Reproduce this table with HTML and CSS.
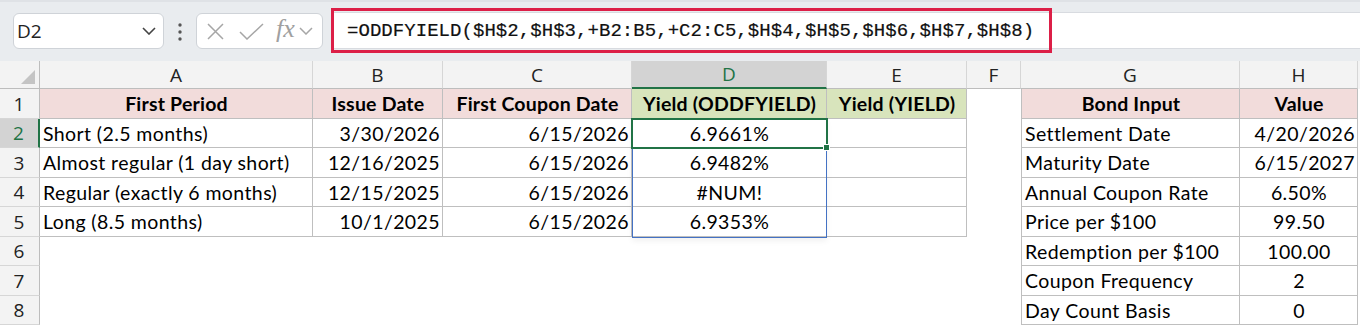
FILE: index.html
```html
<!DOCTYPE html>
<html>
<head>
<meta charset="utf-8">
<link rel="stylesheet" href="styles.css">
</head>
<body>
<div class="topbar">
  <div class="namebox">
    <span class="nb-text">D2</span>
    <svg class="chev" width="14" height="8" viewBox="0 0 14 8"><path d="M1 1 L7 7 L13 1" fill="none" stroke="#444" stroke-width="1.6"/></svg>
  </div>
  <svg class="dots" width="6" height="20" viewBox="0 0 6 20"><circle cx="3" cy="3" r="1.7" fill="#555"/><circle cx="3" cy="10" r="1.7" fill="#555"/><circle cx="3" cy="17" r="1.7" fill="#555"/></svg>
  <div class="fxbox">
    <svg class="ico-x" width="17" height="17" viewBox="0 0 17 17"><path d="M1 1 L16 16 M16 1 L1 16" stroke="#a6a6a6" stroke-width="1.5" fill="none"/></svg>
    <svg class="ico-check" width="25" height="17" viewBox="0 0 25 17"><path d="M1 9 L8 16 L24 1" stroke="#a6a6a6" stroke-width="1.5" fill="none"/></svg>
    <span class="fx">fx</span>
    <svg class="chev2" width="14" height="8" viewBox="0 0 14 8"><path d="M1 1 L7 7 L13 1" fill="none" stroke="#a6a6a6" stroke-width="1.5"/></svg>
  </div>
  <div class="formula">
    <span class="ftext">=ODDFYIELD($H$2,$H$3,+B2:B5,+C2:C5,$H$4,$H$5,$H$6,$H$7,$H$8)</span>
    <div class="redbox"></div>
  </div>
</div>

<div class="sheet">
  <div class="row hdr">
    <div class="rh corner"><div class="tri"></div></div>
    <div class="ch cA">A</div>
    <div class="ch cB">B</div>
    <div class="ch cC">C</div>
    <div class="ch cD sel">D</div>
    <div class="ch cE">E</div>
    <div class="ch cF">F</div>
    <div class="ch cG">G</div>
    <div class="ch cH">H</div>
  </div>

  <div class="row r30">
    <div class="rh">1</div>
    <div class="c cA b pink center bold">First Period</div>
    <div class="c cB b pink center bold">Issue Date</div>
    <div class="c cC b pink center bold">First Coupon Date</div>
    <div class="c cD b green center bold">Yield (ODDFYIELD)</div>
    <div class="c cE b green center bold">Yield (YIELD)</div>
    <div class="c cF"></div>
    <div class="c cG b bl pink center bold">Bond Input</div>
    <div class="c cH b pink center bold">Value</div>
  </div>

  <div class="row r29">
    <div class="rh selr">2</div>
    <div class="c cA b">Short (2.5 months)</div>
    <div class="c cB b right">3/30/2026</div>
    <div class="c cC b right">6/15/2026</div>
    <div class="c cD b center active">6.9661%<span class="handle"></span></div>
    <div class="c cE b"></div>
    <div class="c cF"></div>
    <div class="c cG b bl">Settlement Date</div>
    <div class="c cH b right">4/20/2026</div>
  </div>

  <div class="row r30">
    <div class="rh">3</div>
    <div class="c cA b">Almost regular (1 day short)</div>
    <div class="c cB b right">12/16/2025</div>
    <div class="c cC b right">6/15/2026</div>
    <div class="c cD b center">6.9482%</div>
    <div class="c cE b"></div>
    <div class="c cF"></div>
    <div class="c cG b bl">Maturity Date</div>
    <div class="c cH b right">6/15/2027</div>
  </div>

  <div class="row r29">
    <div class="rh">4</div>
    <div class="c cA b">Regular (exactly 6 months)</div>
    <div class="c cB b right">12/15/2025</div>
    <div class="c cC b right">6/15/2026</div>
    <div class="c cD b center">#NUM!</div>
    <div class="c cE b"></div>
    <div class="c cF"></div>
    <div class="c cG b bl">Annual Coupon Rate</div>
    <div class="c cH b center">6.50%</div>
  </div>

  <div class="row r30">
    <div class="rh">5</div>
    <div class="c cA b">Long (8.5 months)</div>
    <div class="c cB b right">10/1/2025</div>
    <div class="c cC b right">6/15/2026</div>
    <div class="c cD b center">6.9353%</div>
    <div class="c cE b"></div>
    <div class="c cF"></div>
    <div class="c cG b bl">Price per $100</div>
    <div class="c cH b center">99.50</div>
  </div>

  <div class="row r29">
    <div class="rh">6</div>
    <div class="c cA"></div>
    <div class="c cB"></div>
    <div class="c cC"></div>
    <div class="c cD"></div>
    <div class="c cE"></div>
    <div class="c cF"></div>
    <div class="c cG b bl">Redemption per $100</div>
    <div class="c cH b center">100.00</div>
  </div>

  <div class="row r30">
    <div class="rh">7</div>
    <div class="c cA"></div>
    <div class="c cB"></div>
    <div class="c cC"></div>
    <div class="c cD"></div>
    <div class="c cE"></div>
    <div class="c cF"></div>
    <div class="c cG b bl">Coupon Frequency</div>
    <div class="c cH b center">2</div>
  </div>

  <div class="row r29">
    <div class="rh">8</div>
    <div class="c cA"></div>
    <div class="c cB"></div>
    <div class="c cC"></div>
    <div class="c cD"></div>
    <div class="c cE"></div>
    <div class="c cF"></div>
    <div class="c cG b bl">Day Count Basis</div>
    <div class="c cH b center">0</div>
  </div>

  <div class="range"></div>
</div>
</body>
</html>
```

FILE: styles.css
```css
* { box-sizing: border-box; }
html, body { margin: 0; padding: 0; }
body {
  width: 1360px;
  height: 328px;
  overflow: hidden;
  background: #ffffff;
  font-family: "Lato", "Liberation Sans", sans-serif;
  color: #000;
}

/* ---------- top bar ---------- */
.topbar {
  height: 61px;
  background: #e9ecef;
  display: flex;
  align-items: flex-start;
  padding-left: 13px;
  border-top: 2px solid #dfe2e6;
}
.namebox {
  margin-top: 11px;
  width: 151px;
  height: 36px;
  background: #fff;
  border: 1px solid #cfd3d8;
  border-radius: 6px;
  display: flex;
  align-items: center;
  padding-left: 3px;
  padding-right: 7px;
  justify-content: space-between;
}
.nb-text {
  font-family: "Open Sans", "Noto Sans", sans-serif;
  font-size: 19px;
  color: #222;
}
.dots { margin: 20px 0 0 13px; }
.fxbox {
  margin: 11px 0 0 13px;
  width: 127px;
  height: 36px;
  background: #fff;
  border: 1px solid #cfd3d8;
  border-radius: 6px;
  display: flex;
  align-items: center;
  padding-left: 10px;
}
.ico-x { margin-right: 15px; }
.ico-check { margin-right: 12px; }
.fx {
  font-family: "Liberation Serif", serif;
  font-style: italic;
  font-size: 26px;
  color: #a0a0a0;
  margin-top: -4px;
  margin-right: 4px;
}
.formula {
  position: relative;
  flex: 1;
  margin: 10px 0 0 9px;
  height: 37px;
  background: #fff;
  border-top: 1px solid #d8dbe0;
  border-bottom: 1px solid #d8dbe0;
  display: flex;
  align-items: center;
  padding-left: 15px;
}
.ftext {
  font-family: "Liberation Mono", "DejaVu Sans Mono", monospace;
  font-size: 19px;
  color: #111;
  letter-spacing: 0.05px;
  -webkit-text-stroke: 0.2px #111;
}
.redbox {
  position: absolute;
  left: -1px;
  top: -5px;
  width: 721px;
  height: 45px;
  border: 3px solid #dc1f47;
}

/* ---------- sheet ---------- */
.sheet { position: relative; }
.row { display: flex; }
.row.hdr { height: 28px; background: #f3f3f3; }
.row.r30 { height: 30px; }
.row.r29 { height: 29px; }

.rh {
  width: 40px;
  flex: none;
  background: #f3f3f3;
  border-right: 1px solid #bdbdbd;
  border-bottom: 1px solid #d6d6d6;
  font-family: "Open Sans", "Noto Sans", sans-serif;
  font-size: 19px;
  color: #222;
  display: flex;
  align-items: center;
  justify-content: center;
  padding-right: 1px;
}
.rh.corner {
  position: relative;
  border-bottom: 1px solid #bdbdbd;
}
.tri {
  position: absolute;
  right: 4px;
  bottom: 4px;
  width: 0; height: 0;
  border-left: 14px solid transparent;
  border-bottom: 14px solid #c4c4c4;
}
.rh.selr {
  background: #d3d3d3;
  color: #217346;
  border-right: 2px solid #217346;
}

.ch {
  flex: none;
  border-right: 1px solid #d6d6d6;
  border-bottom: 1px solid #bdbdbd;
  font-family: "Open Sans", "Noto Sans", sans-serif;
  font-size: 19px;
  color: #222;
  display: flex;
  align-items: center;
  justify-content: center;
}
.ch.sel {
  background: #d3d3d3;
  color: #217346;
  border-bottom: 2px solid #217346;
}

.cA { width: 273px; }
.cB { width: 130px; }
.cC { width: 189px; }
.cD { width: 195px; }
.cE { width: 140px; }
.cF { width: 54px; }
.cG { width: 219px; }
.cH { width: 118px; }

.c {
  flex: none;
  font-size: 19.5px;
  letter-spacing: 0.4px;
  display: flex;
  align-items: center;
  padding: 0 2px 0 3px;
  white-space: nowrap;
  position: relative;
}
.c.b {
  border-right: 1px solid #bfbfbf;
  border-bottom: 1px solid #bfbfbf;
}
.c.bl { border-left: 1px solid #bfbfbf; }
.c.center { justify-content: center; }
.c.right { justify-content: flex-end; }
.c.bold { font-weight: 700; letter-spacing: 0.2px; }
.pink { background: #f2dcdb; }
.green { background: #d8e4bc; }

.c.active {
  outline: 2px solid #217346;
  outline-offset: -1px;
  z-index: 2;
}
.handle {
  position: absolute;
  right: -4px;
  bottom: -4px;
  width: 7px;
  height: 7px;
  background: #217346;
  border: 1px solid #fff;
  z-index: 3;
}
.range {
  position: absolute;
  left: 632px;
  top: 58px;
  width: 195px;
  height: 119px;
  border: 1px solid #4472c4;
  box-shadow: 0 3px 6px rgba(0,0,0,0.06);
  pointer-events: none;
  z-index: 1;
}
```
